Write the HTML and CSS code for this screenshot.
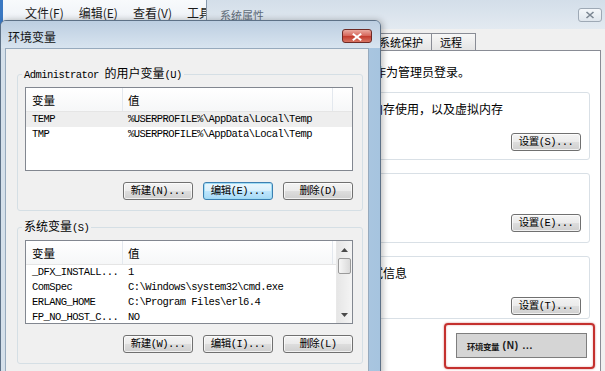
FILE: index.html
```html
<!DOCTYPE html>
<html lang="zh-CN">
<head>
<meta charset="utf-8">
<title>环境变量</title>
<link rel="stylesheet" href="styles.css">
</head>
<body>
<div class="explorer">
  <div class="menu">
    <span>文件(F)</span><span>编辑(E)</span><span>查看(V)</span><span>工具</span>
  </div>
</div>

<div class="sysprops">
  <div class="sp-title">
    <span>系统属性</span>
    <span class="sp-close"><svg width="22" height="12" viewBox="0 0 22 12"><path d="M7.5 3 L14.5 9 M14.5 3 L7.5 9" stroke="#7b8692" stroke-width="1.6" fill="none"/></svg></span>
  </div>
  <div class="tabs">
    <div class="tab">计算机名</div><div class="tab">硬件</div><div class="tab">高级</div><div class="tab">系统保护</div><div class="tab">远程</div>
  </div>
  <div class="panel">
    <p class="note">要进行大多数更改，您必须作为管理员登录。</p>
    <fieldset class="sgrp g1">
      <legend>性能</legend>
      <p class="sgrp-text">视觉效果，处理器计划，内存使用，以及虚拟内存</p>
      <div class="sbtns"><button class="btn">设置(S)...</button></div>
    </fieldset>
    <fieldset class="sgrp g2">
      <legend>用户配置文件</legend>
      <div class="sgrp-text"></div>
      <div class="sbtns"><button class="btn">设置(E)...</button></div>
    </fieldset>
    <fieldset class="sgrp g3">
      <legend>启动和故障恢复</legend>
      <p class="sgrp-text">系统启动、系统失败和调试信息</p>
      <div class="sbtns"><button class="btn">设置(T)...</button></div>
    </fieldset>
  </div>
</div>

<div class="dlg">
  <div class="dlg-title">
    <span class="dlg-title-text">环境变量</span>
    <span class="dlg-close"><svg width="30" height="14" viewBox="0 0 30 14"><path d="M10.5 3.5 L19.5 10.5 M19.5 3.5 L10.5 10.5" stroke="#fff" stroke-width="2.2" fill="none"/></svg></span>
  </div>
  <div class="dlg-body">
    <fieldset class="grp">
      <legend><span class="mono">Administrator </span>的用户变量<span class="mono">(U)</span></legend>
      <div class="list">
        <div class="list-main">
          <div class="lhead"><div class="lh c1">变量</div><div class="lh c2">值</div></div>
          <div class="row sel"><div class="c1">TEMP</div><div class="c2">%USERPROFILE%\AppData\Local\Temp</div></div>
          <div class="row"><div class="c1">TMP</div><div class="c2">%USERPROFILE%\AppData\Local\Temp</div></div>
        </div>
      </div>
      <div class="btns">
        <button class="btn">新建(N)...</button>
        <button class="btn focus">编辑(E)...</button>
        <button class="btn">删除(D)</button>
      </div>
    </fieldset>

    <fieldset class="grp grp2">
      <legend>系统变量<span class="mono">(S)</span></legend>
      <div class="list">
        <div class="list-main">
          <div class="lhead"><div class="lh c1">变量</div><div class="lh c2">值</div></div>
          <div class="row"><div class="c1">_DFX_INSTALL...</div><div class="c2">1</div></div>
          <div class="row"><div class="c1">ComSpec</div><div class="c2">C:\Windows\system32\cmd.exe</div></div>
          <div class="row"><div class="c1">ERLANG_HOME</div><div class="c2">C:\Program Files\erl6.4</div></div>
          <div class="row"><div class="c1">FP_NO_HOST_C...</div><div class="c2">NO</div></div>
        </div>
        <div class="vscroll">
          <div class="sb-btn"><svg width="7" height="4" viewBox="0 0 7 4"><polygon points="0,4 3.5,0 7,4" fill="#4a4a4a"/></svg></div>
          <div class="sb-thumb"></div>
          <div class="sb-track"></div>
          <div class="sb-btn"><svg width="7" height="4" viewBox="0 0 7 4"><polygon points="0,0 7,0 3.5,4" fill="#4a4a4a"/></svg></div>
        </div>
      </div>
      <div class="btns">
        <button class="btn">新建(W)...</button>
        <button class="btn">编辑(I)...</button>
        <button class="btn">删除(L)</button>
      </div>
    </fieldset>
  </div>
</div>

<div class="annot">
  <div class="env-btn"><span class="env-cn">环境变量</span><span class="env-lat"> (N) ...</span></div>
</div>
</body>
</html>
```

FILE: styles.css
```css
* { box-sizing: border-box; }

body {
  margin: 0;
  width: 605px;
  height: 371px;
  overflow: hidden;
  position: relative;
  background: #e8edf3;
  font-family: "Noto Sans CJK SC", sans-serif;
  color: #000;
}

p { margin: 0; }

.mono {
  font-family: "Liberation Mono", monospace;
  font-size: 10.5px;
  letter-spacing: -0.55px;
}

/* ---------- explorer (background) ---------- */
.explorer {
  position: absolute;
  left: 0;
  top: 0;
  width: 206px;
  height: 30px;
  overflow: hidden;
  background: linear-gradient(#f8fafc, #eaeff5);
  border-left: 3px solid #3a78c2;
}
.menu {
  display: flex;
  gap: 15px;
  padding: 4px 0 0 22px;
  font-size: 12px;
  line-height: 18px;
  color: #1b1b1b;
  white-space: nowrap;
}

/* ---------- system properties (background) ---------- */
.sysprops {
  position: absolute;
  left: 206px;
  top: 0;
  width: 399px;
  height: 371px;
  background: #f0f0f0;
  border-left: 1px solid #8799ad;
  display: flex;
  flex-direction: column;
}
.sp-title {
  height: 29px;
  flex: none;
  display: flex;
  justify-content: space-between;
  align-items: flex-start;
  padding: 8px 3px 0 13px;
  background: linear-gradient(#d3dee9, #e3eaf1);
  font-size: 11px;
  line-height: 14px;
  color: #5f6b78;
}
.sp-close {
  width: 24px;
  height: 14px;
  border: 1px solid #9ea9b5;
  border-radius: 3px;
  background: linear-gradient(#f4f7fa, #dfe6ed);
  display: flex;
}
.tabs {
  flex: none;
  display: flex;
  height: 17px;
  margin-top: 4px;
  padding-left: 14px;
}
.tab {
  min-width: 45px;
  padding: 0 8px;
  margin-right: -1px;
  border: 1px solid #898c95;
  border-bottom: none;
  background: linear-gradient(#f7f7f7, #e4e4e4);
  font-size: 11px;
  line-height: 16px;
  white-space: nowrap;
}
.panel {
  flex: 1;
  margin: 0 4px 0 6px;
  border: 1px solid #898c95;
  border-bottom: none;
  background: #fff;
  padding: 13px 10px 0 16px;
}
.note {
  font-size: 12px;
  line-height: 16px;
  white-space: nowrap;
}
.sgrp {
  margin: 6px 0 0;
  padding: 0 8px 8px 8px;
  border: 1px solid #d9e0e6;
  border-radius: 3px;
  min-width: 0;
}
.sgrp legend {
  padding: 0 2px;
  font-size: 12px;
  line-height: 14px;
}
.sgrp.g1 { margin-top: 5px; }
.sgrp.g2 { padding-bottom: 10px; }
.sgrp.g3 { padding-bottom: 3px; }
.sgrp-text {
  margin-top: 2px;
  height: 16px;
  font-size: 12px;
  line-height: 16px;
  white-space: nowrap;
}
.sbtns {
  display: flex;
  justify-content: flex-end;
  margin-top: 16px;
}

/* ---------- buttons ---------- */
.btn {
  width: 70px;
  height: 18px;
  padding: 0;
  border: 1px solid #707070;
  border-radius: 3px;
  background: linear-gradient(#f3f3f3 0%, #ebebeb 48%, #dddddd 52%, #cfcfcf 100%);
  box-shadow: inset 0 0 0 1px rgba(255, 255, 255, 0.7);
  font-family: "Liberation Mono", "Noto Sans CJK SC", monospace;
  font-size: 10.5px;
  letter-spacing: -0.55px;
  line-height: 14px;
  color: #000;
  display: flex;
  align-items: center;
  justify-content: center;
  white-space: nowrap;
}
.btn.focus {
  border-color: #3c7fb1;
  background: linear-gradient(#eaf6fd 0%, #d9f0fc 48%, #bee6fd 52%, #a7d9f5 100%);
  box-shadow: inset 0 0 0 1px #9fdcf5;
}

/* ---------- environment dialog ---------- */
.dlg {
  position: absolute;
  left: 0;
  top: 20px;
  width: 381px;
  height: 360px;
  border: 1px solid #5d7187;
  border-radius: 6px 6px 0 0;
  background: linear-gradient(90deg, #d5e0ea, #c6d7e8 60%, #a6c4df);
  display: flex;
  flex-direction: column;
  box-shadow: 2px 0 6px rgba(0, 0, 0, 0.25);
}
.dlg-title {
  height: 27px;
  flex: none;
  display: flex;
  justify-content: space-between;
  align-items: flex-start;
  padding: 0 8px 0 7px;
  background: linear-gradient(#bccee1, #d8e4ef);
  border-radius: 5px 5px 0 0;
}
.dlg-title-text {
  margin-top: 9px;
  font-size: 12px;
  line-height: 14px;
  color: #111;
}
.dlg-close {
  margin-top: 8px;
  width: 30px;
  height: 14px;
  border: 1px solid #6e2a25;
  border-radius: 3px;
  background: linear-gradient(#eaa99f 0%, #d6665a 48%, #c23b2d 52%, #d87463 100%);
  display: flex;
}
.dlg-body {
  flex: 1;
  margin: 0 11px 0 4px;
  background: #f0f0f0;
  border: 1px solid #97aabd;
  border-bottom: none;
  padding: 0 5px 0 11px;
}
.grp {
  margin: 17px 0 0;
  padding: 0 9px 10px 7px;
  border: 1px solid #d5dfe5;
  border-radius: 3px;
  min-width: 0;
}
.grp2 { margin-top: 8px; }
.grp legend {
  margin-left: -3px;
  padding: 0 2px;
  font-size: 12px;
  line-height: 14px;
  white-space: nowrap;
}
.list {
  height: 84px;
  margin-top: 5px;
  border: 1px solid #828790;
  background: #fff;
  display: flex;
  overflow: hidden;
}
.list-main {
  flex: 1;
  min-width: 0;
}
.lhead {
  display: flex;
  height: 24px;
  border-bottom: 1px solid #e5e5e5;
  background: linear-gradient(#ffffff, #f6f7f8);
}
.lh {
  font-size: 11.5px;
  line-height: 23px;
  padding-top: 1px;
  border-right: 1px solid #e3e8ee;
}
.c1 {
  width: 97px;
  flex: none;
  padding-left: 6px;
  overflow: hidden;
}
.c2 {
  padding-left: 5px;
}
.lh.c2 { width: 210px; }
.row {
  display: flex;
  height: 15px;
  font-family: "Liberation Mono", monospace;
  font-size: 10.5px;
  letter-spacing: -0.55px;
  line-height: 15px;
  white-space: nowrap;
}
.row.sel { background: #eeeeee; }

.vscroll {
  width: 16px;
  flex: none;
  background: linear-gradient(90deg, #e6e6e6, #f4f4f4);
  border-left: 1px solid #e8e8e8;
  display: flex;
  flex-direction: column;
}
.sb-btn {
  height: 17px;
  flex: none;
  display: flex;
  align-items: center;
  justify-content: center;
}
.sb-thumb {
  height: 16px;
  flex: none;
  margin: 0 1px;
  border: 1px solid #9a9a9a;
  border-radius: 2px;
  background: linear-gradient(90deg, #f6f6f6, #dadada);
}
.sb-track { flex: 1; }

.btns {
  display: flex;
  justify-content: flex-end;
  gap: 10px;
  margin-top: 11px;
}

/* ---------- red annotation ---------- */
.annot {
  position: absolute;
  left: 444px;
  top: 323px;
  width: 151px;
  height: 46px;
  border: 2px solid #c4302e;
  border-radius: 4px;
  padding: 8px 0 0 10px;
  box-shadow: 0 0 2px rgba(180, 30, 30, 0.6), inset 0 0 2px rgba(180, 30, 30, 0.4);
}
.env-btn {
  width: 131px;
  height: 25px;
  background: #d5d5d5;
  border: 1px solid #7e7e7e;
  display: flex;
  align-items: center;
  padding-left: 10px;
  font-weight: bold;
  color: #1a1a1a;
  white-space: nowrap;
}
.env-cn {
  font-size: 8.5px;
  letter-spacing: -0.5px;
}
.env-lat {
  font-family: "Liberation Sans", sans-serif;
  font-size: 10px;
  letter-spacing: 0.8px;
  white-space: pre;
}
```
